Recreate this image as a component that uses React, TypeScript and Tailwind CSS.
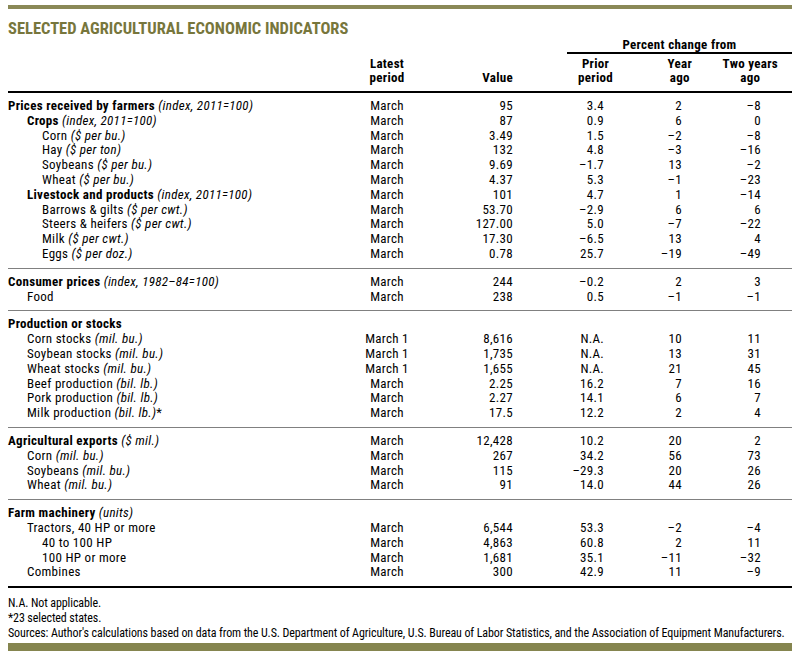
type Row = {
  name: string;
  unit?: string;
  after?: string;
  level: 0 | 1 | 2;
  bold?: boolean;
  period?: string;
  cells?: [string, string, string, string];
};

const sections: Row[][] = [
  [
    { name: "Prices received by farmers", unit: "(index, 2011=100)", level: 0, bold: true, period: "March", cells: ["95", "3.4", "2", "–8"] },
    { name: "Crops", unit: "(index, 2011=100)", level: 1, bold: true, period: "March", cells: ["87", "0.9", "6", "0"] },
    { name: "Corn", unit: "($ per bu.)", level: 2, period: "March", cells: ["3.49", "1.5", "–2", "–8"] },
    { name: "Hay", unit: "($ per ton)", level: 2, period: "March", cells: ["132", "4.8", "–3", "–16"] },
    { name: "Soybeans", unit: "($ per bu.)", level: 2, period: "March", cells: ["9.69", "–1.7", "13", "–2"] },
    { name: "Wheat", unit: "($ per bu.)", level: 2, period: "March", cells: ["4.37", "5.3", "–1", "–23"] },
    { name: "Livestock and products", unit: "(index, 2011=100)", level: 1, bold: true, period: "March", cells: ["101", "4.7", "1", "–14"] },
    { name: "Barrows & gilts", unit: "($ per cwt.)", level: 2, period: "March", cells: ["53.70", "–2.9", "6", "6"] },
    { name: "Steers & heifers", unit: "($ per cwt.)", level: 2, period: "March", cells: ["127.00", "5.0", "–7", "–22"] },
    { name: "Milk", unit: "($ per cwt.)", level: 2, period: "March", cells: ["17.30", "–6.5", "13", "4"] },
    { name: "Eggs", unit: "($ per doz.)", level: 2, period: "March", cells: ["0.78", "25.7", "–19", "–49"] },
  ],
  [
    { name: "Consumer prices", unit: "(index, 1982–84=100)", level: 0, bold: true, period: "March", cells: ["244", "–0.2", "2", "3"] },
    { name: "Food", level: 1, period: "March", cells: ["238", "0.5", "–1", "–1"] },
  ],
  [
    { name: "Production or stocks", level: 0, bold: true },
    { name: "Corn stocks", unit: "(mil. bu.)", level: 1, period: "March 1", cells: ["8,616", "N.A.", "10", "11"] },
    { name: "Soybean stocks", unit: "(mil. bu.)", level: 1, period: "March 1", cells: ["1,735", "N.A.", "13", "31"] },
    { name: "Wheat stocks", unit: "(mil. bu.)", level: 1, period: "March 1", cells: ["1,655", "N.A.", "21", "45"] },
    { name: "Beef production", unit: "(bil. lb.)", level: 1, period: "March", cells: ["2.25", "16.2", "7", "16"] },
    { name: "Pork production", unit: "(bil. lb.)", level: 1, period: "March", cells: ["2.27", "14.1", "6", "7"] },
    { name: "Milk production", unit: "(bil. lb.)", after: "*", level: 1, period: "March", cells: ["17.5", "12.2", "2", "4"] },
  ],
  [
    { name: "Agricultural exports", unit: "($ mil.)", level: 0, bold: true, period: "March", cells: ["12,428", "10.2", "20", "2"] },
    { name: "Corn", unit: "(mil. bu.)", level: 1, period: "March", cells: ["267", "34.2", "56", "73"] },
    { name: "Soybeans", unit: "(mil. bu.)", level: 1, period: "March", cells: ["115", "–29.3", "20", "26"] },
    { name: "Wheat", unit: "(mil. bu.)", level: 1, period: "March", cells: ["91", "14.0", "44", "26"] },
  ],
  [
    { name: "Farm machinery", unit: "(units)", level: 0, bold: true },
    { name: "Tractors, 40 HP or more", level: 1, period: "March", cells: ["6,544", "53.3", "–2", "–4"] },
    { name: "40 to 100 HP", level: 2, period: "March", cells: ["4,863", "60.8", "2", "11"] },
    { name: "100 HP or more", level: 2, period: "March", cells: ["1,681", "35.1", "–11", "–32"] },
    { name: "Combines", level: 1, period: "March", cells: ["300", "42.9", "11", "–9"] },
  ],
];

// column right edges follow the printed table: 360 / 414 / 513 / 604 / 682 / 761 / 792
const cols = "grid grid-cols-[352px_54px_99px_91px_78px_79px_31px]";
const indent = ["pl-0", "pl-[19px]", "pl-[34px]"];

function DataRow({ row }: { row: Row }) {
  return (
    <div className={`${cols} h-[14.8px] leading-[14.8px]`}>
      <div className={`${indent[row.level]} whitespace-nowrap`}>
        <span className={row.bold ? "font-bold" : ""}>{row.name}</span>
        {row.unit ? <span className="italic"> {row.unit}</span> : null}
        {row.after ?? null}
      </div>
      <div className="text-center">{row.period ?? ""}</div>
      {row.cells
        ? row.cells.map((c, i) => (
            <div key={i} className="text-right">
              {c}
            </div>
          ))
        : null}
    </div>
  );
}

function HeadCell({ top, bottom, shift }: { top: string; bottom: string; shift: string }) {
  return (
    <div className="flex justify-end">
      <div className={`${shift} text-center`}>
        {top}
        <br />
        {bottom}
      </div>
    </div>
  );
}

export default function App() {
  return (
    <div className="h-[652px] w-[800px] overflow-hidden bg-white px-2 pt-[5px] font-['Roboto',sans-serif] text-[13px] tracking-[0.3px] text-black [font-stretch:condensed]">
      <div className="h-[4px] bg-[#8a8957]" />
      <h1 className="mt-[12px] h-[16px] text-[16.5px] leading-[16px] font-bold tracking-normal text-[#77763c]">
        SELECTED AGRICULTURAL ECONOMIC INDICATORS
      </h1>

      <div className={`${cols} font-bold`}>
        <div className="col-span-3" />
        <div className="col-span-4 ml-[54px] border-b-2 border-black text-center leading-[15px]">
          Percent change from
        </div>
      </div>
      <div className={`${cols} h-[39px] items-end border-b-2 border-black pb-[6px] leading-[14px] font-bold`}>
        <div />
        <div className="text-center">
          Latest
          <br />
          period
        </div>
        <div className="text-right">Value</div>
        <HeadCell top="Prior" bottom="period" shift="-mr-[9px]" />
        <HeadCell top="Year" bottom="ago" shift="-mr-[10px]" />
        <HeadCell top="Two years" bottom="ago" shift="-mr-[17px]" />
      </div>

      {sections.map((rows, i) => (
        <div
          key={i}
          className={`py-[6px] ${
            i < sections.length - 1 ? "border-b border-[#808080]" : "border-b-2 border-black"
          }`}
        >
          {rows.map((row, j) => (
            <DataRow key={j} row={row} />
          ))}
        </div>
      ))}

      <div className="pt-[8px] text-[12px] leading-[15px] tracking-[-0.1px]">
        <p>N.A. Not applicable.</p>
        <p>*23 selected states.</p>
        <p className="whitespace-nowrap">
          Sources: Author's calculations based on data from the U.S. Department of Agriculture, U.S. Bureau of Labor
          Statistics, and the Association of Equipment Manufacturers.
        </p>
      </div>
      <div className="mt-[2px] h-[8px] bg-[#85854f]" />
    </div>
  );
}
